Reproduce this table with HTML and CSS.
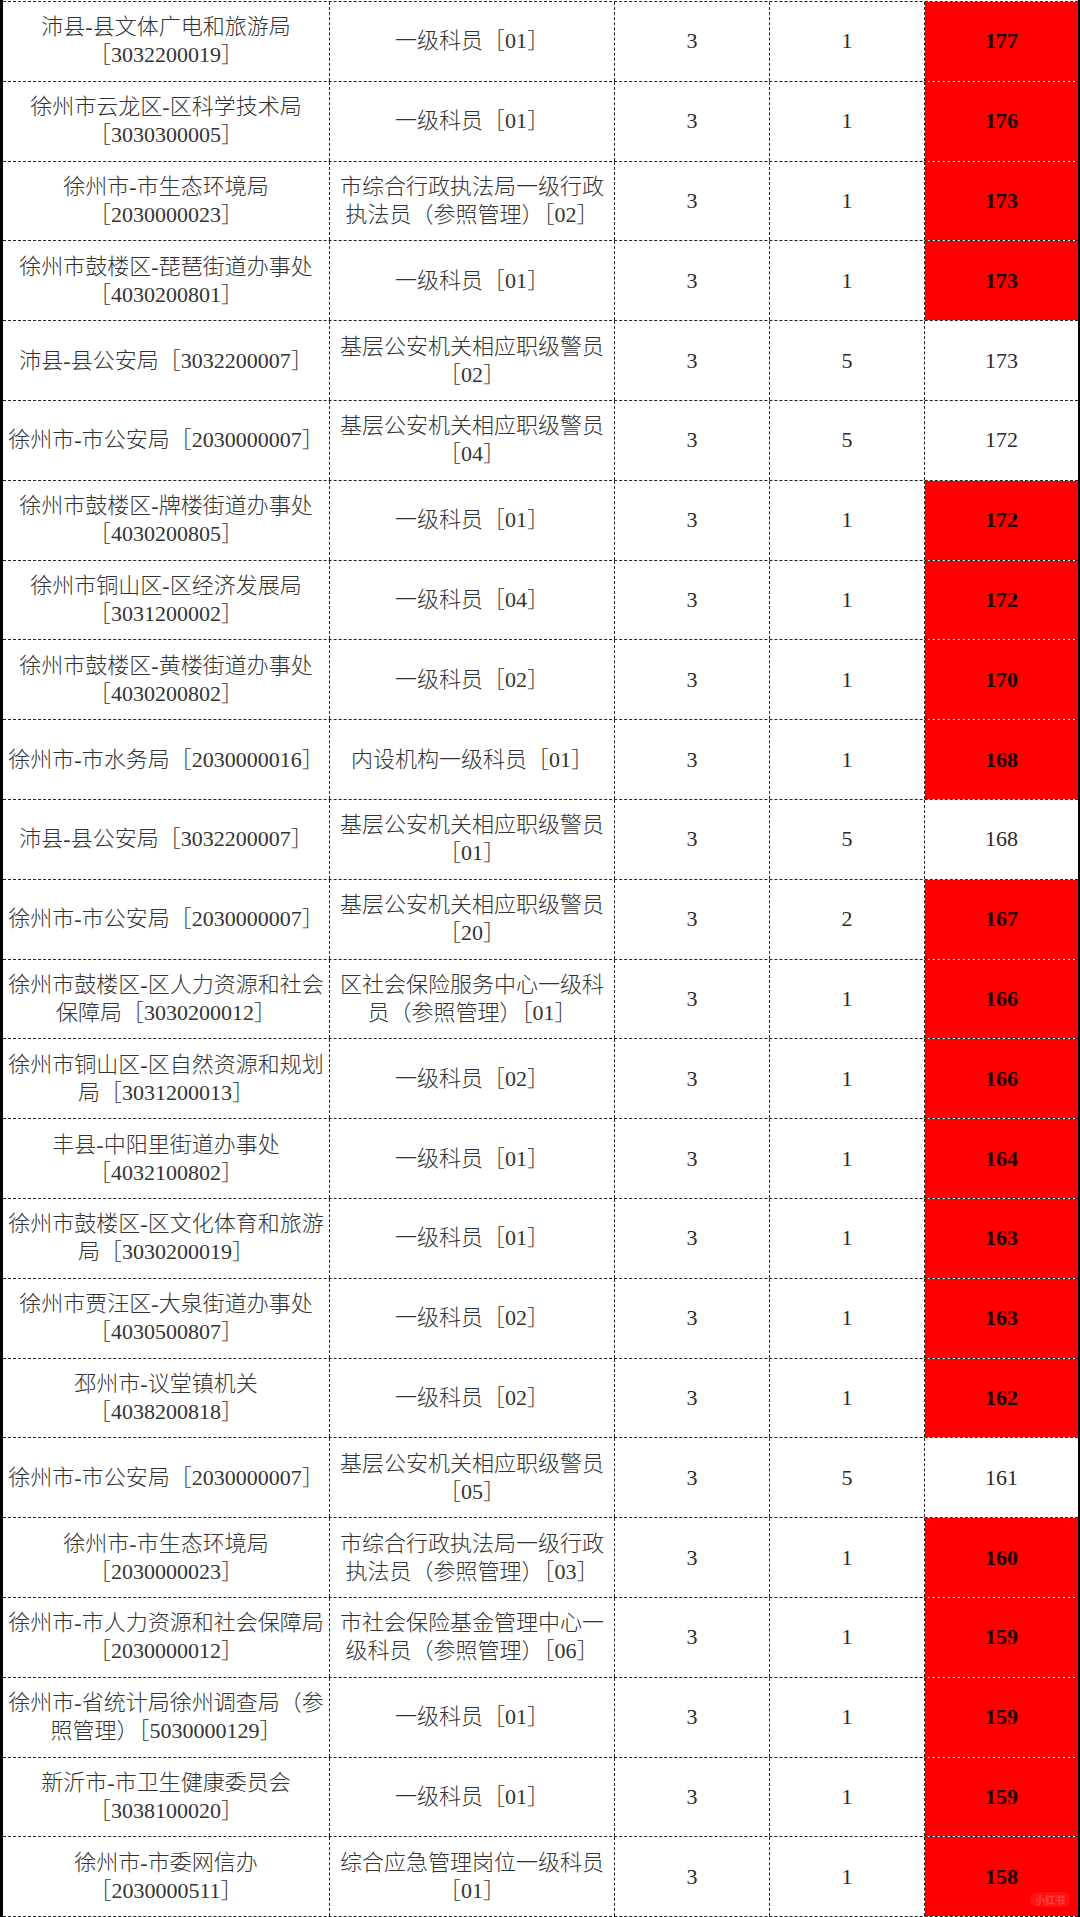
FILE: index.html
```html
<!DOCTYPE html>
<html lang="zh-CN">
<head>
<meta charset="utf-8">
<title>成绩表</title>
<link rel="stylesheet" href="styles.css">
</head>
<body>
<div class="page">
  <div class="table">
    <div class="row"><div class="c unit">沛县-县文体广电和旅游局<br>［3032200019］</div><div class="c post">一级科员［01］</div><div class="c num">3</div><div class="c num">1</div><div class="c score hot">177</div></div>
    <div class="row"><div class="c unit">徐州市云龙区-区科学技术局<br>［3030300005］</div><div class="c post">一级科员［01］</div><div class="c num">3</div><div class="c num">1</div><div class="c score hot">176</div></div>
    <div class="row"><div class="c unit">徐州市-市生态环境局<br>［2030000023］</div><div class="c post">市综合行政执法局一级行政<br>执法员（参照管理）［02］</div><div class="c num">3</div><div class="c num">1</div><div class="c score hot">173</div></div>
    <div class="row"><div class="c unit">徐州市鼓楼区-琵琶街道办事处<br>［4030200801］</div><div class="c post">一级科员［01］</div><div class="c num">3</div><div class="c num">1</div><div class="c score hot">173</div></div>
    <div class="row"><div class="c unit">沛县-县公安局［3032200007］</div><div class="c post">基层公安机关相应职级警员<br>［02］</div><div class="c num">3</div><div class="c num">5</div><div class="c score">173</div></div>
    <div class="row"><div class="c unit">徐州市-市公安局［2030000007］</div><div class="c post">基层公安机关相应职级警员<br>［04］</div><div class="c num">3</div><div class="c num">5</div><div class="c score">172</div></div>
    <div class="row"><div class="c unit">徐州市鼓楼区-牌楼街道办事处<br>［4030200805］</div><div class="c post">一级科员［01］</div><div class="c num">3</div><div class="c num">1</div><div class="c score hot">172</div></div>
    <div class="row"><div class="c unit">徐州市铜山区-区经济发展局<br>［3031200002］</div><div class="c post">一级科员［04］</div><div class="c num">3</div><div class="c num">1</div><div class="c score hot">172</div></div>
    <div class="row"><div class="c unit">徐州市鼓楼区-黄楼街道办事处<br>［4030200802］</div><div class="c post">一级科员［02］</div><div class="c num">3</div><div class="c num">1</div><div class="c score hot">170</div></div>
    <div class="row"><div class="c unit">徐州市-市水务局［2030000016］</div><div class="c post">内设机构一级科员［01］</div><div class="c num">3</div><div class="c num">1</div><div class="c score hot">168</div></div>
    <div class="row"><div class="c unit">沛县-县公安局［3032200007］</div><div class="c post">基层公安机关相应职级警员<br>［01］</div><div class="c num">3</div><div class="c num">5</div><div class="c score">168</div></div>
    <div class="row"><div class="c unit">徐州市-市公安局［2030000007］</div><div class="c post">基层公安机关相应职级警员<br>［20］</div><div class="c num">3</div><div class="c num">2</div><div class="c score hot">167</div></div>
    <div class="row"><div class="c unit">徐州市鼓楼区-区人力资源和社会<br>保障局［3030200012］</div><div class="c post">区社会保险服务中心一级科<br>员（参照管理）［01］</div><div class="c num">3</div><div class="c num">1</div><div class="c score hot">166</div></div>
    <div class="row"><div class="c unit">徐州市铜山区-区自然资源和规划<br>局［3031200013］</div><div class="c post">一级科员［02］</div><div class="c num">3</div><div class="c num">1</div><div class="c score hot">166</div></div>
    <div class="row"><div class="c unit">丰县-中阳里街道办事处<br>［4032100802］</div><div class="c post">一级科员［01］</div><div class="c num">3</div><div class="c num">1</div><div class="c score hot">164</div></div>
    <div class="row"><div class="c unit">徐州市鼓楼区-区文化体育和旅游<br>局［3030200019］</div><div class="c post">一级科员［01］</div><div class="c num">3</div><div class="c num">1</div><div class="c score hot">163</div></div>
    <div class="row"><div class="c unit">徐州市贾汪区-大泉街道办事处<br>［4030500807］</div><div class="c post">一级科员［02］</div><div class="c num">3</div><div class="c num">1</div><div class="c score hot">163</div></div>
    <div class="row"><div class="c unit">邳州市-议堂镇机关<br>［4038200818］</div><div class="c post">一级科员［02］</div><div class="c num">3</div><div class="c num">1</div><div class="c score hot">162</div></div>
    <div class="row"><div class="c unit">徐州市-市公安局［2030000007］</div><div class="c post">基层公安机关相应职级警员<br>［05］</div><div class="c num">3</div><div class="c num">5</div><div class="c score">161</div></div>
    <div class="row"><div class="c unit">徐州市-市生态环境局<br>［2030000023］</div><div class="c post">市综合行政执法局一级行政<br>执法员（参照管理）［03］</div><div class="c num">3</div><div class="c num">1</div><div class="c score hot">160</div></div>
    <div class="row"><div class="c unit">徐州市-市人力资源和社会保障局<br>［2030000012］</div><div class="c post">市社会保险基金管理中心一<br>级科员（参照管理）［06］</div><div class="c num">3</div><div class="c num">1</div><div class="c score hot">159</div></div>
    <div class="row"><div class="c unit">徐州市-省统计局徐州调查局（参<br>照管理）［5030000129］</div><div class="c post">一级科员［01］</div><div class="c num">3</div><div class="c num">1</div><div class="c score hot">159</div></div>
    <div class="row"><div class="c unit">新沂市-市卫生健康委员会<br>［3038100020］</div><div class="c post">一级科员［01］</div><div class="c num">3</div><div class="c num">1</div><div class="c score hot">159</div></div>
    <div class="row"><div class="c unit">徐州市-市委网信办<br>［2030000511］</div><div class="c post">综合应急管理岗位一级科员<br>［01］</div><div class="c num">3</div><div class="c num">1</div><div class="c score hot">158</div></div>
  </div>
  <div class="mark">小红书</div>
</div>
</body>
</html>
```
FILE: styles.css
```css
html, body {
  margin: 0;
  padding: 0;
  background: #ffffff;
}

.page {
  position: relative;
  width: 1080px;
  height: 1917px;
  overflow: hidden;
  background: #ffffff;
}

.table {
  display: flex;
  flex-direction: column;
  padding-top: 1px;
  border-left: 3px solid #000;
  border-right: 2px solid #000;
  height: 1917px;
  box-sizing: border-box;
}

.row {
  display: grid;
  grid-template-columns: 327px 285px 155px 155px 153px;
  height: 79.8px;
  border-top: 1px dashed #222;
  box-sizing: border-box;
  flex: none;
}

.row:last-child {
  border-bottom: 1px dashed #222;
  height: 80.8px;
}

.c {
  display: flex;
  align-items: center;
  justify-content: center;
  text-align: center;
  border-right: 1px dashed #222;
  font-family: "Liberation Serif", "Noto Sans CJK SC", serif;
  font-size: 22px;
  line-height: 28px;
  color: #333;
  font-weight: 300;
  letter-spacing: 0;
  min-width: 0;
}

.c.score {
  border-right: none;
}

.c.num,
.c.score {
  font-weight: 400;
  color: #2b2b2b;
}

.c.hot {
  background: #ff0000;
  font-weight: 700;
  color: #1e0000;
}

.mark {
  position: absolute;
  right: 10px;
  bottom: 10px;
  padding: 1px 5px;
  border-radius: 8px;
  background: rgba(255, 255, 255, 0.07);
  color: rgba(255, 255, 255, 0.22);
  font-family: "Noto Sans CJK SC", sans-serif;
  font-size: 10px;
  line-height: 13px;
  font-weight: 700;
}
```
